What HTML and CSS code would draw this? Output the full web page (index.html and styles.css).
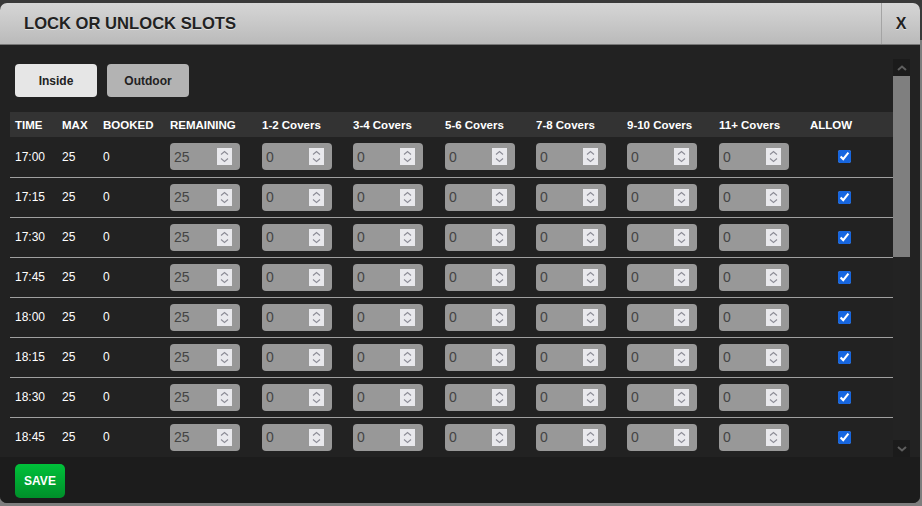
FILE: index.html
```html
<!DOCTYPE html>
<html lang="en">

<head>
    <meta charset="UTF-8">
    <meta name="viewport" content="width=device-width, initial-scale=1.0">
    <title>Lock or unlock slots</title>
    <link rel="stylesheet" href="styles.css">
</head>

<body>
    <div class="dialog">
        <div class="dialog-header">
            <h2 class="dialog-title">LOCK OR UNLOCK SLOTS</h2>
            <button class="close-btn">X</button>
        </div>
        <div class="dialog-body">
            <div class="scroll-area">
                <div class="scroll-content">
                    <div class="tabs">
                        <button class="tab active">Inside</button>
                        <button class="tab">Outdoor</button>
                    </div>
                    <table class="slots">
                        <colgroup>
                            <col style="width:47px">
                            <col style="width:41px">
                            <col style="width:67px">
                            <col style="width:92px">
                            <col style="width:91px">
                            <col style="width:92px">
                            <col style="width:91px">
                            <col style="width:91px">
                            <col style="width:92px">
                            <col style="width:91px">
                            <col style="width:88px">
                        </colgroup>
                        <thead>
                            <tr>
                                <th>TIME</th>
                                <th>MAX</th>
                                <th>BOOKED</th>
                                <th>REMAINING</th>
                                <th>1-2 Covers</th>
                                <th>3-4 Covers</th>
                                <th>5-6 Covers</th>
                                <th>7-8 Covers</th>
                                <th>9-10 Covers</th>
                                <th>11+ Covers</th>
                                <th>ALLOW</th>
                            </tr>
                        </thead>
                        <tbody id="slot-rows">
                            <!-- rows are built below -->
                        </tbody>
                    </table>
                </div>
                <!-- scrollbar drawn by hand, the browser hides its own -->
                <div class="scrollbar">
                    <div class="sb-btn">
                        <svg width="10" height="6" viewBox="0 0 10 6">
                            <path d="M1 5 L5 1.5 L9 5" fill="none" stroke="#5e5e5e" stroke-width="2" />
                        </svg>
                    </div>
                    <div class="sb-track">
                        <div class="sb-thumb"></div>
                    </div>
                    <div class="sb-btn">
                        <svg width="10" height="6" viewBox="0 0 10 6">
                            <path d="M1 1 L5 4.5 L9 1" fill="none" stroke="#5e5e5e" stroke-width="2" />
                        </svg>
                    </div>
                </div>
            </div>
        </div>
        <div class="dialog-footer">
            <button class="save-btn">SAVE</button>
        </div>
    </div>

    <script>
        const times = ['17:00', '17:15', '17:30', '17:45', '18:00', '18:15', '18:30', '18:45'];

        const spinner = `
            <span class="spin">
                <svg width="15" height="17" viewBox="0 0 15 17">
                    <path d="M4 6.5 L7.5 3.5 L11 6.5 M4 10.5 L7.5 13.5 L11 10.5" fill="none" stroke="#8c8c96" stroke-width="1.1"/>
                </svg>
            </span>`;

        function numField(value) {
            return `<div class="num"><input type="text" value="${value}" readonly>${spinner}</div>`;
        }

        const rows = document.getElementById('slot-rows');
        times.forEach(time => {
            const tr = document.createElement('tr');
            let html = `<td>${time}</td><td>25</td><td>0</td><td>${numField(25)}</td>`;
            for (let i = 0; i < 6; i++) {
                html += `<td>${numField(0)}</td>`;
            }
            html += `<td class="allow"><input type="checkbox" checked></td>`;
            tr.innerHTML = html;
            rows.appendChild(tr);
        });
    </script>
</body>

</html>
```

FILE: styles.css
```css
* {
    margin: 0;
    padding: 0;
    box-sizing: border-box;
    font-family: "Liberation Sans", Arial, sans-serif;
}

body {
    background: linear-gradient(to bottom, #3a3a3a 0, #3a3a3a 40px, #7e7e7e 40px);
    height: 506px;
    overflow: hidden;
}

.dialog {
    margin-top: 3px;
    width: 920px;
    height: 500px;
    background-color: #222222;
    border-radius: 7px;
    overflow: hidden;
    display: flex;
    flex-direction: column;
}

.dialog-header {
    height: 42px;
    display: flex;
    align-items: stretch;
    background: linear-gradient(to bottom, #d6d6d6, #bababa);
    border-bottom: 1px solid #777;
}

.dialog-title {
    flex: 1;
    padding-left: 24px;
    display: flex;
    align-items: center;
    font-size: 16.6px;
    font-weight: bold;
    color: #222;
    text-shadow: 0 1px 0 rgba(255, 255, 255, 0.5);
}

.close-btn {
    width: 39px;
    border: none;
    border-left: 1px solid #a4a4a4;
    background: none;
    font-size: 16px;
    font-weight: bold;
    color: #222;
    text-shadow: 0 1px 0 rgba(255, 255, 255, 0.5);
    cursor: pointer;
}

.dialog-body {
    padding: 14px 10px 0 10px;
}

.scroll-area {
    height: 398px;
    display: flex;
}

.scroll-content {
    width: 883px;
    overflow: hidden;
}

.scrollbar {
    width: 17px;
    display: flex;
    flex-direction: column;
    background-color: #232323;
}

.sb-btn {
    height: 17px;
    display: flex;
    align-items: center;
    justify-content: center;
    background-color: #1b1b1b;
}

.sb-track {
    flex: 1;
}

.sb-thumb {
    height: 181px;
    background-color: #7f7f7f;
}

.tabs {
    display: flex;
    gap: 10px;
    padding: 5px 5px 0 5px;
    margin-bottom: 15px;
}

.tab {
    width: 82px;
    height: 33px;
    border: none;
    border-radius: 4px;
    background-color: #b3b3b3;
    color: #222;
    font-size: 12px;
    font-weight: bold;
    cursor: pointer;
}

.tab.active {
    background-color: #e6e6e6;
}

.slots {
    width: 883px;
    table-layout: fixed;
    border-collapse: collapse;
    color: #fff;
    font-size: 12px;
}

.slots th {
    height: 25px;
    padding-left: 5px;
    background-color: #333;
    text-align: left;
    font-size: 11.5px;
    font-weight: bold;
    white-space: nowrap;
}

.slots td {
    height: 40px;
    padding-left: 5px;
    border-bottom: 1px solid #a0a0a0;
    vertical-align: middle;
}

.num {
    width: 70px;
    height: 27px;
    display: flex;
    align-items: center;
    padding: 0 8px 0 4px;
    background-color: #989898;
    border-radius: 4px;
}

.num input {
    flex: 1;
    min-width: 0;
    border: none;
    background: none;
    font-size: 14px;
    color: #444;
    -webkit-text-fill-color: #444;
    outline: none;
}

.spin {
    display: flex;
    width: 15px;
    height: 17px;
    background-color: #e9e9ed;
}

.slots td.allow {
    padding-left: 33px;
}

.allow input {
    display: block;
    width: 13px;
    height: 13px;
    margin: 0;
    accent-color: #1766df;
}

.dialog-footer {
    flex: 1;
    padding: 7px 15px 0 15px;
    background-color: #1c1c1c;
}

.save-btn {
    width: 50px;
    height: 34px;
    border: none;
    border-radius: 5px;
    background: linear-gradient(to bottom, #00c13a, #008f2a);
    color: #fff;
    font-size: 12px;
    font-weight: bold;
    cursor: pointer;
}
```
